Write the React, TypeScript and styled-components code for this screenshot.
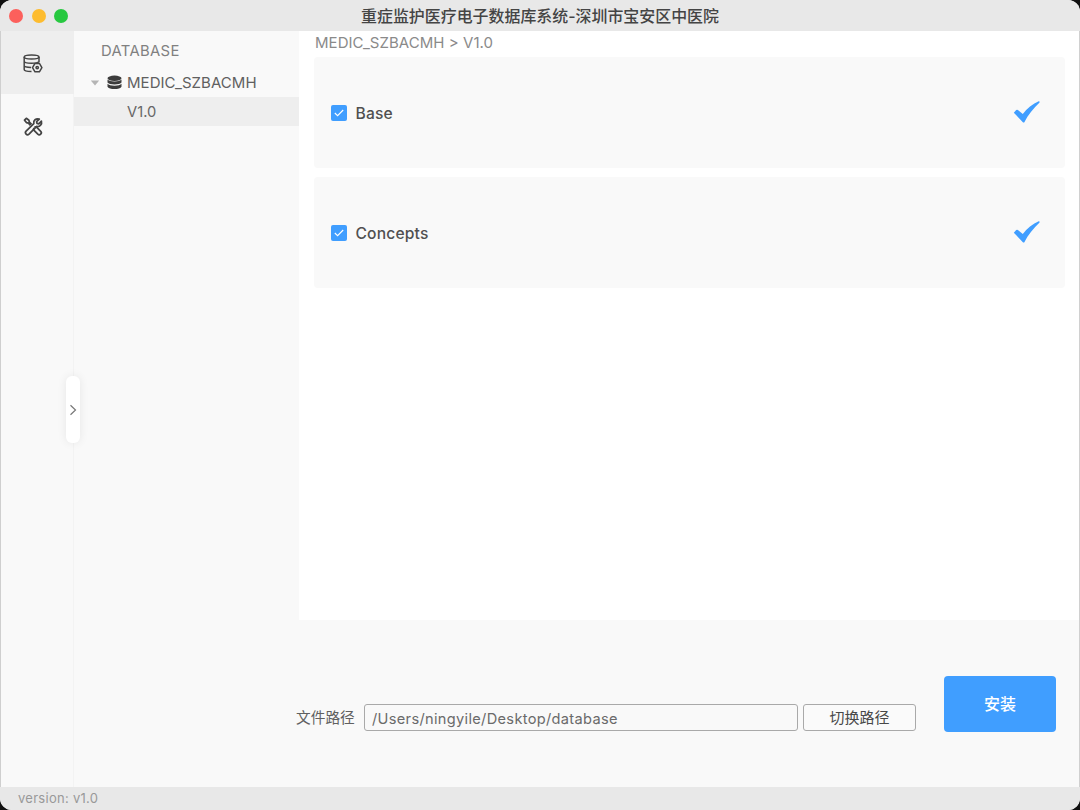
import React from 'react';
import styled, { createGlobalStyle } from 'styled-components';

const GlobalStyle = createGlobalStyle`
  * { box-sizing: border-box; }
  html, body { margin: 0; background: #111; }
  body { font-family: Inter, "Noto Sans CJK SC", sans-serif; font-size: 15px; color: #666; }
  button, input { font: inherit; color: inherit; margin: 0; }
`;

const Window = styled.div`
  width: 1080px;
  height: 810px;
  display: flex;
  flex-direction: column;
  overflow: hidden;
  border-radius: 12px;
  background: #f9f9f9;
`;

const TitleBar = styled.header`
  height: 31px;
  flex: none;
  display: grid;
  grid-template-columns: 1fr auto 1fr;
  align-items: center;
  padding: 0 9px;
  background: #e8e8e8;
`;

const Lights = styled.div`
  display: flex;
  gap: 8.5px;
`;

const Light = styled.span<{ $color: string }>`
  width: 14px;
  height: 14px;
  border-radius: 50%;
  background: ${(p) => p.$color};
`;

const Title = styled.h1`
  margin: 0;
  padding-top: 2px;
  font-size: 15.95px;
  line-height: 29px;
  font-weight: 500;
  color: #444;
  white-space: nowrap;
`;

const Body = styled.div`
  flex: 1;
  min-height: 0;
  display: flex;
  border-left: 1px solid #cfcfcf;
  border-right: 1px solid #d0d0d0;
`;

const Rail = styled.nav`
  position: relative;
  width: 73px;
  flex: none;
  border-right: 1px solid #f3f3f3;
`;

const RailButton = styled.button<{ $active?: boolean }>`
  display: flex;
  align-items: center;
  width: 73px;
  height: 63px;
  padding: 2px 0 0 21px;
  border: 0;
  color: #444;
  background: ${(p) => (p.$active ? '#eeeeee' : 'transparent')};
`;

const Handle = styled.button`
  position: absolute;
  left: 65px;
  top: 345px;
  width: 14px;
  height: 67px;
  padding: 0;
  display: flex;
  align-items: center;
  justify-content: center;
  border: 0;
  border-radius: 6px;
  background: #fff;
  box-shadow: 0 0 10px rgba(0, 0, 0, 0.08);
`;

const Workspace = styled.div`
  flex: 1;
  display: flex;
  flex-direction: column;
`;

const Upper = styled.div`
  height: 589px;
  display: flex;
`;

const Sidebar = styled.aside`
  width: 225px;
  flex: none;
  padding-top: 9px;
`;

const SideHeading = styled.div`
  height: 20px;
  line-height: 22px;
  padding-left: 27px;
  font-size: 14.8px;
  letter-spacing: 0.35px;
  color: #808080;
`;

const TreeRow = styled.div`
  display: flex;
  align-items: center;
  height: 37px;
  padding: 8px 0 0 16px;
  line-height: 20px;
  font-size: 15px;
  letter-spacing: 0.05px;
  color: #606060;
`;

const Arrow = styled.svg`
  margin-right: 7px;
`;

const TreeName = styled.span`
  margin-left: 5px;
`;

const TreeLeaf = styled.div`
  height: 29px;
  line-height: 30px;
  padding-left: 53px;
  font-size: 14.7px;
  letter-spacing: 0.05px;
  background: #eeeeee;
`;

const Content = styled.main`
  flex: 1;
  padding: 0 14px 0 15px;
  background: #fff;
`;

const Crumbs = styled.div`
  height: 26px;
  line-height: 23px;
  padding-left: 1px;
  font-size: 15px;
  letter-spacing: 0.04px;
  color: #8a8a8a;
`;

const Card = styled.section`
  display: flex;
  align-items: center;
  height: 111px;
  margin-bottom: 9px;
  padding: 0 24px 0 17px;
  border-radius: 4px;
  background: #f9f9f9;
`;

const CheckBox = styled.span`
  width: 16px;
  height: 16px;
  border-radius: 2px;
  display: flex;
  align-items: center;
  justify-content: center;
  background: #409eff;
`;

const CardName = styled.span`
  flex: 1;
  margin-left: 8.5px;
  padding-top: 1px;
  font-size: 15.6px;
  letter-spacing: 0.18px;
  font-weight: 500;
  color: #505050;
`;

const InstallBar = styled.div`
  flex: 1;
  display: flex;
  align-items: flex-start;
  padding: 56px 23px 0 222px;
`;

const PathForm = styled.div`
  flex: 1;
  display: flex;
  align-items: center;
  height: 27px;
  margin-top: 28px;
`;

const PathLabel = styled.label`
  width: 68px;
  padding-top: 2px;
  font-size: 14.7px;
  line-height: 27px;
  color: #606060;
`;

const PathInput = styled.input`
  width: 434px;
  height: 27px;
  padding: 3px 7px 0;
  border: 1px solid #a9a9a9;
  border-radius: 3px;
  outline: 0;
  background: #f9f9f9;
  font-size: 14.6px;
  letter-spacing: 0.32px;
  color: #6a6a6a;
`;

const PathButton = styled.button`
  width: 113px;
  height: 27px;
  margin-left: 5px;
  padding: 0;
  border: 1px solid #a9a9a9;
  border-radius: 3px;
  background: #fafafa;
  font-size: 15px;
  line-height: 24px;
  color: #484848;
`;

const InstallButton = styled.button`
  width: 112px;
  height: 56px;
  padding: 0 0 2px;
  border: 0;
  border-radius: 4px;
  background: #409eff;
  color: #fff;
  font-size: 16px;
  font-weight: 500;
`;

const StatusBar = styled.footer`
  height: 23px;
  flex: none;
  padding-left: 18px;
  line-height: 23px;
  font-size: 13px;
  letter-spacing: 0.28px;
  color: #999;
  background: #e8e8e8;
`;

const DatabaseGearIcon = () => (
  <svg width="22" height="22" viewBox="0 0 22 22" fill="none" stroke="currentColor" strokeWidth="1.5" strokeLinejoin="round">
    <ellipse cx="9.6" cy="4" rx="7.4" ry="2" />
    <path d="M2.2 4v12.5c0 1.1 3 2 7.3 2M17 4v5.2M2.2 8.2c0 1.2 3.2 2 7.4 2 3.6 0 6.4-.5 7.4-1.5M2.2 12.5c0 1 2.6 1.8 6.9 2" />
    <path d="M13 10.4h4.4l2.5 4.2-2.5 4.2H13l-2.5-4.2z" fill="#eee" />
    <circle cx="15.2" cy="14.6" r="1.2" />
  </svg>
);

const ToolsIcon = () => (
  <svg width="22" height="22" viewBox="0 0 22 22" fill="none" stroke="currentColor" strokeWidth="1.75" strokeLinejoin="round">
    <path d="M8.5 9.3 6.4 7.2 4.6 6.7 2.5 4.1 4.3 2.3 6.9 4.3 7.4 6.2 9.6 8.3M12.4 11.2c1-.5 1.9-.2 2.7.5l3.6 3.6c1.8 1.8-.9 4.7-2.9 2.9l-3.5-3.5c-.8-.8-1-1.8-.5-2.8" />
    <path d="M17.3 3.1 14.6 5.7l.4 1.7 1.8.4 2.6-2.6c.9 3.2-1.6 5.9-4.7 5.2L7 18.1c-2 1.9-4.8-.9-2.9-2.9l7.7-7.6c-.8-3.1 2.2-5.6 5.5-4.5z" />
  </svg>
);

const DatabaseIcon = () => (
  <svg width="15" height="15" viewBox="0 0 15 15" fill="#3c3c3c">
    <ellipse cx="7.5" cy="3.3" rx="7" ry="2.7" />
    <path d="M.5 4.6c1.8 2.5 12.2 2.5 14 0v3c-1.2 2.5-12.8 2.5-14 0z" />
    <path d="M.5 8.8c1.8 2.5 12.2 2.5 14 0v2.9c-1.2 3.2-12.8 3.2-14 0z" />
  </svg>
);

const InstalledMark = () => (
  <svg width="28" height="26" viewBox="0 0 28 26">
    <path d="M.8 12.7 3.2 10.1Q4 9.4 4.9 10.1L9.8 14C14 8.5 19.4 3.8 26.2 1L26.6 2.4C20.4 8 15.3 14.5 11.2 22.4H10.1Z" fill="#409eff" />
  </svg>
);

const components = ['Base', 'Concepts'];

export default function App() {
  return (
    <>
      <GlobalStyle />
      <Window>
        <TitleBar>
          <Lights>
            <Light $color="#fc605c" />
            <Light $color="#fdbc2f" />
            <Light $color="#27c840" />
          </Lights>
          <Title>重症监护医疗电子数据库系统-深圳市宝安区中医院</Title>
        </TitleBar>
        <Body>
          <Rail>
            <RailButton $active><DatabaseGearIcon /></RailButton>
            <RailButton><ToolsIcon /></RailButton>
            <Handle>
              <svg width="8" height="12" viewBox="0 0 8 12" fill="none" stroke="#777" strokeWidth="1.2">
                <path d="m1.5 1.2 5 4.8-5 4.8" />
              </svg>
            </Handle>
          </Rail>
          <Workspace>
            <Upper>
              <Sidebar>
                <SideHeading>DATABASE</SideHeading>
                <TreeRow>
                  <Arrow width="10" height="6" viewBox="0 0 10 6"><path d="M.8.5h8.4L5 5.5z" fill="#b5b5b5" /></Arrow>
                  <DatabaseIcon />
                  <TreeName>MEDIC_SZBACMH</TreeName>
                </TreeRow>
                <TreeLeaf>V1.0</TreeLeaf>
              </Sidebar>
              <Content>
                <Crumbs>MEDIC_SZBACMH &gt; V1.0</Crumbs>
                {components.map((name) => (
                  <Card key={name}>
                    <CheckBox>
                      <svg width="10" height="8" viewBox="0 0 10 8" fill="none" stroke="#fff" strokeWidth="1.1">
                        <path d="m.8 4 2.8 2.7L9.2 1" />
                      </svg>
                    </CheckBox>
                    <CardName>{name}</CardName>
                    <InstalledMark />
                  </Card>
                ))}
              </Content>
            </Upper>
            <InstallBar>
              <PathForm>
                <PathLabel htmlFor="path">文件路径</PathLabel>
                <PathInput id="path" defaultValue="/Users/ningyile/Desktop/database" />
                <PathButton>切换路径</PathButton>
              </PathForm>
              <InstallButton>安装</InstallButton>
            </InstallBar>
          </Workspace>
        </Body>
        <StatusBar>version: v1.0</StatusBar>
      </Window>
    </>
  );
}
